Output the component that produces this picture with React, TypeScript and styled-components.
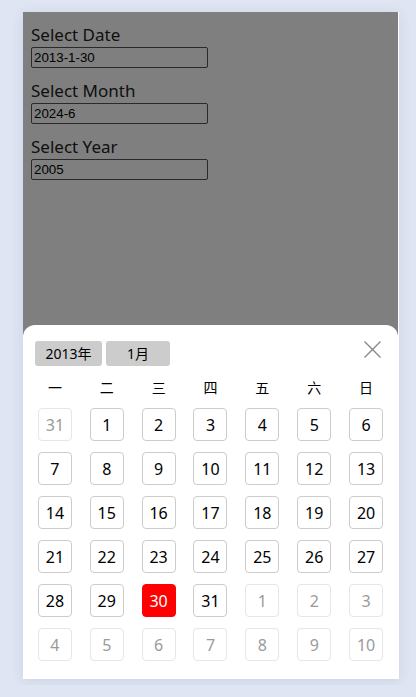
import React from "react";
import styled, { createGlobalStyle } from "styled-components";

const GlobalStyle = createGlobalStyle`
  html, body { margin: 0; padding: 0; }
  body {
    background: #dfe5f2;
    font-family: "Noto Sans", "Noto Sans CJK SC", sans-serif;
  }
`;

const Page = styled.div`
  padding: 12px 0 0 23px;
  height: 685px;
  box-sizing: border-box;
`;

const Phone = styled.div`
  position: relative;
  width: 376px;
  height: 667px;
  background: #fff;
  box-shadow: 0 2px 12px rgba(60, 80, 120, 0.12);
  overflow: hidden;
`;

const Content = styled.div`
  padding: 11px 8px 10px;
`;

const Field = styled.div`
  display: flex;
  flex-direction: column;
  align-items: flex-start;
  margin-bottom: 11px;
`;

const Label = styled.label`
  font-size: 17px;
  line-height: 23px;
  color: #222;
  margin-bottom: 1px;
`;

const Input = styled.input`
  box-sizing: border-box;
  width: 177px;
  height: 21px;
  padding: 0 2px;
  border: 1px solid #555;
  border-radius: 2px;
  background: #fff;
  font-family: "Liberation Sans", Arial, sans-serif;
  font-size: 13.33px;
  color: #000;
  outline: none;
`;

const Overlay = styled.div`
  position: absolute;
  top: 0;
  left: 0;
  bottom: 0;
  width: 375px;
  background: rgba(0, 0, 0, 0.5);
  display: flex;
  flex-direction: column;
  justify-content: flex-end;
`;

const Sheet = styled.div`
  background: #fff;
  border-radius: 12px 12px 0 0;
  padding: 16px 0 18px;
`;

const Header = styled.div`
  display: flex;
  align-items: center;
  gap: 4px;
  margin: 0 12px;
  height: 25px;
`;

const Pick = styled.button<{ $w: number }>`
  width: ${(p) => p.$w}px;
  height: 25px;
  padding: 0;
  border: none;
  border-radius: 3px;
  background: #cccccc;
  color: #000;
  font-family: "Noto Sans", "Noto Sans CJK SC", sans-serif;
  font-size: 14px;
  line-height: 25px;
`;

const Close = styled.button`
  margin-left: auto;
  margin-right: 4px;
  margin-top: -8px;
  width: 19px;
  height: 19px;
  padding: 0;
  border: none;
  background: transparent;
  display: flex;
  align-items: center;
  justify-content: center;
`;

const Weekdays = styled.div`
  display: grid;
  grid-template-columns: repeat(7, 1fr);
  margin: 12px 6px 0;
  height: 20px;
`;

const Weekday = styled.div`
  text-align: center;
  font-size: 14px;
  line-height: 20px;
  color: #000;
`;

const Grid = styled.div`
  display: grid;
  grid-template-columns: repeat(7, 1fr);
  row-gap: 11px;
  margin: 10px 6px 0;
`;

const Cell = styled.div<{ $other?: boolean; $active?: boolean }>`
  justify-self: center;
  box-sizing: border-box;
  width: 34px;
  height: 33px;
  border-radius: 4px;
  border: 1px solid
    ${(p) => (p.$active ? "#ff0000" : p.$other ? "#e6e6e6" : "#cccccc")};
  background: ${(p) => (p.$active ? "#ff0000" : "#fff")};
  color: ${(p) => (p.$active ? "#fff" : p.$other ? "#9a9a9a" : "#000")};
  display: flex;
  align-items: center;
  justify-content: center;
  font-size: 16px;
`;

const weekdays = ["一", "二", "三", "四", "五", "六", "日"];

type Day = { d: number; other?: boolean; active?: boolean };

const days: Day[] = [
  { d: 31, other: true },
  ...Array.from({ length: 31 }, (_, i) => ({ d: i + 1, active: i + 1 === 30 })),
  ...Array.from({ length: 10 }, (_, i) => ({ d: i + 1, other: true })),
];

export default function App() {
  return (
    <>
      <GlobalStyle />
      <Page>
        <Phone>
          <Content>
            <Field>
              <Label>Select Date</Label>
              <Input readOnly value="2013-1-30" />
            </Field>
            <Field>
              <Label>Select Month</Label>
              <Input readOnly value="2024-6" />
            </Field>
            <Field>
              <Label>Select Year</Label>
              <Input readOnly value="2005" />
            </Field>
          </Content>
          <Overlay>
            <Sheet>
              <Header>
                <Pick $w={67}>2013年</Pick>
                <Pick $w={64}>1月</Pick>
                <Close aria-label="close">
                  <svg width="19" height="19" viewBox="0 0 19 19">
                    <path
                      d="M1.5 1.5 L17.5 17.5 M17.5 1.5 L1.5 17.5"
                      stroke="#888"
                      strokeWidth="1.4"
                      fill="none"
                    />
                  </svg>
                </Close>
              </Header>
              <Weekdays>
                {weekdays.map((w) => (
                  <Weekday key={w}>{w}</Weekday>
                ))}
              </Weekdays>
              <Grid>
                {days.map((day, i) => (
                  <Cell key={i} $other={day.other} $active={day.active}>
                    {day.d}
                  </Cell>
                ))}
              </Grid>
            </Sheet>
          </Overlay>
        </Phone>
      </Page>
    </>
  );
}
